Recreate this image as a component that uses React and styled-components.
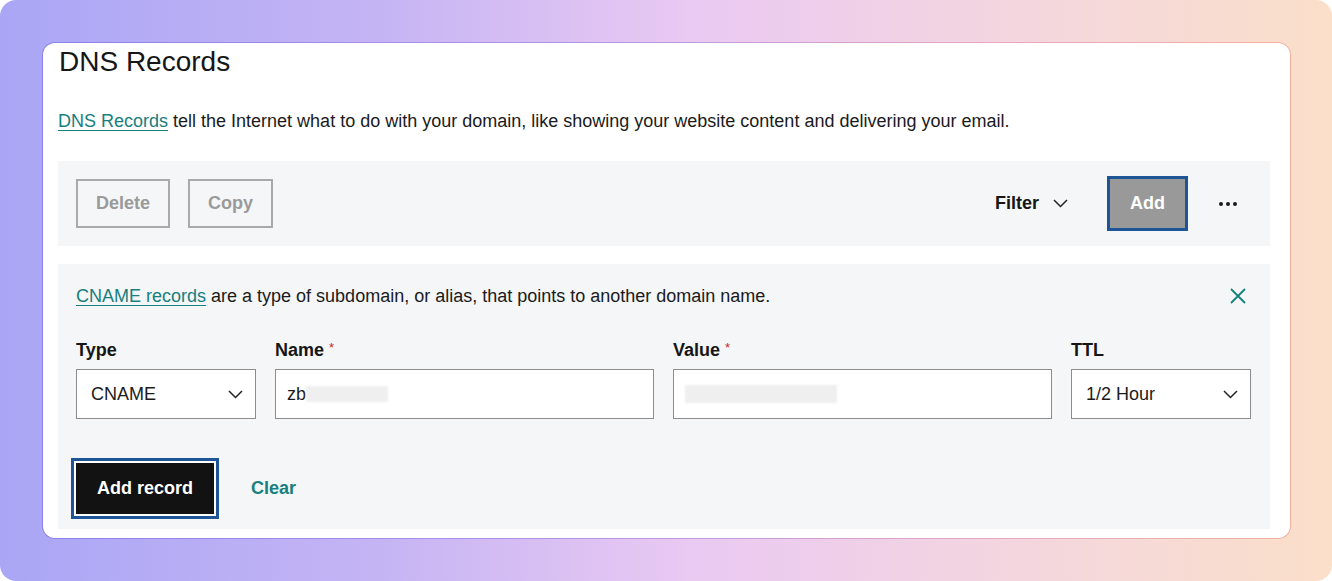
import styled, { createGlobalStyle } from "styled-components";

const GlobalStyle = createGlobalStyle`
    html, body {
        margin: 0;
        padding: 0;
        background: #ffffff;
        font-family: "Liberation Sans", Arial, Helvetica, sans-serif;
    }
    * {
        box-sizing: border-box;
    }
`;

function Chevron() {
    return (
        <svg width="15" height="9" viewBox="0 0 15 9" fill="none">
            <path d="M1 1l6.5 6.5L14 1" stroke="#222" strokeWidth="1.5" />
        </svg>
    );
}

function CloseIcon() {
    return (
        <svg width="16" height="16" viewBox="0 0 16 16" fill="none">
            <path d="M1 1l14 14M15 1L1 15" stroke="#17807e" strokeWidth="1.8" />
        </svg>
    );
}

export default function App() {
    return (
        <>
            <GlobalStyle />
            <Backdrop>
                <CardBorder>
                    <Card>
                        <Title>DNS Records</Title>
                        <Description>
                            <TealLink>DNS Records</TealLink> tell the Internet what to do with your domain, like showing your website content and delivering your email.
                        </Description>

                        <Toolbar>
                            <ToolGroup>
                                <GhostButton>Delete</GhostButton>
                                <GhostButton>Copy</GhostButton>
                            </ToolGroup>
                            <ToolGroup>
                                <FilterButton>
                                    Filter <Chevron />
                                </FilterButton>
                                <AddButton>Add</AddButton>
                                <MoreButton>
                                    <Dot /><Dot /><Dot />
                                </MoreButton>
                            </ToolGroup>
                        </Toolbar>

                        <FormPanel>
                            <InfoRow>
                                <span>
                                    <TealLink>CNAME records</TealLink> are a type of subdomain, or alias, that points to another domain name.
                                </span>
                                <CloseButton><CloseIcon /></CloseButton>
                            </InfoRow>

                            <FieldGrid>
                                <Field>
                                    <Label>Type</Label>
                                    <Select>
                                        CNAME <Chevron />
                                    </Select>
                                </Field>
                                <Field>
                                    <Label>Name <Required>*</Required></Label>
                                    <Input>
                                        zb<Blur $width={82} />
                                    </Input>
                                </Field>
                                <Field>
                                    <Label>Value <Required>*</Required></Label>
                                    <Input>
                                        <Blur $width={152} $tall />
                                    </Input>
                                </Field>
                                <Field>
                                    <Label>TTL</Label>
                                    <Select>
                                        1/2 Hour <Chevron />
                                    </Select>
                                </Field>
                            </FieldGrid>

                            <Actions>
                                <PrimaryButton>Add record</PrimaryButton>
                                <TextButton>Clear</TextButton>
                            </Actions>
                        </FormPanel>
                    </Card>
                </CardBorder>
            </Backdrop>
        </>
    );
}

const Backdrop = styled.div`
    width: 1332px;
    height: 581px;
    border-radius: 16px;
    padding: 42px 42px 0 42px;
    background: linear-gradient(90deg, #aaa6f5 0%, #c4b4f4 28%, #eac9f2 52%, #f3d6df 76%, #fbdfc9 100%);
`;

const CardBorder = styled.div`
    width: 1249px;
    height: 497px;
    padding: 1px;
    border-radius: 13px;
    background: linear-gradient(90deg, #8d80ee 0%, #b596e6 45%, #e7a8c4 75%, #f4b09e 100%);
`;

const Card = styled.div`
    height: 100%;
    background: #ffffff;
    border-radius: 12px;
    padding: 2px 20px 0 15px;
    overflow: hidden;
`;

const Title = styled.h1`
    margin: 0;
    font-size: 28px;
    line-height: 34px;
    font-weight: 400;
    color: #161616;
    padding-left: 1px;
`;

const Description = styled.p`
    margin: 30px 0 0 0;
    font-size: 18px;
    line-height: 24px;
    color: #1b1b1b;
`;

const TealLink = styled.a`
    color: #17807e;
    text-decoration: underline;
    text-underline-offset: 3px;
    text-decoration-thickness: 1px;
    cursor: pointer;
`;

const Toolbar = styled.div`
    margin-top: 28px;
    height: 85px;
    background: #f4f6f8;
    display: flex;
    align-items: center;
    justify-content: space-between;
    padding: 0 21px 0 18px;
`;

const ToolGroup = styled.div`
    display: flex;
    align-items: center;
    gap: 18px;
`;

const GhostButton = styled.button`
    height: 49px;
    padding: 0 18px;
    background: transparent;
    border: 2px solid #a9a9a9;
    color: #9a9a9a;
    font-family: inherit;
    font-size: 18px;
    font-weight: 700;
`;

const FilterButton = styled.button`
    display: flex;
    align-items: center;
    gap: 14px;
    background: transparent;
    border: none;
    padding: 0 12px;
    margin-right: 9px;
    color: #161616;
    font-family: inherit;
    font-size: 18px;
    font-weight: 700;
`;

const AddButton = styled.button`
    width: 81px;
    height: 55px;
    background: #999999;
    border: 3px solid #1d5597;
    color: #ffffff;
    font-family: inherit;
    font-size: 18px;
    font-weight: 700;
`;

const MoreButton = styled.button`
    display: flex;
    gap: 3px;
    background: transparent;
    border: none;
    padding: 0 12px;
    margin-left: 1px;
`;

const Dot = styled.span`
    width: 4px;
    height: 4px;
    border-radius: 50%;
    background: #1b1b1b;
`;

const FormPanel = styled.div`
    margin-top: 18px;
    height: 265px;
    background: #f4f6f8;
    padding: 20px 19px 0 18px;
`;

const InfoRow = styled.div`
    display: flex;
    justify-content: space-between;
    align-items: center;
    font-size: 18px;
    line-height: 24px;
    color: #1b1b1b;
`;

const CloseButton = styled.button`
    display: flex;
    background: transparent;
    border: none;
    padding: 0;
    margin-right: 5px;
`;

const FieldGrid = styled.div`
    display: grid;
    grid-template-columns: 180px 1fr 1fr 180px;
    gap: 19px;
    margin-top: 30px;
`;

const Field = styled.div`
    display: flex;
    flex-direction: column;
    gap: 7px;
`;

const Label = styled.label`
    font-size: 18px;
    line-height: 24px;
    font-weight: 700;
    color: #161616;
`;

const Required = styled.span`
    color: #d0271d;
    font-size: 13px;
    font-weight: 400;
    vertical-align: top;
    position: relative;
    top: -2px;
`;

const Select = styled.div`
    height: 50px;
    background: #ffffff;
    border: 1px solid #8d8d8d;
    display: flex;
    align-items: center;
    justify-content: space-between;
    padding: 0 12px 0 14px;
    font-size: 18px;
    color: #1b1b1b;
`;

const Input = styled.div`
    height: 50px;
    background: #ffffff;
    border: 1px solid #8d8d8d;
    display: flex;
    align-items: center;
    padding: 0 11px;
    font-size: 18px;
    color: #1b1b1b;
`;

const Blur = styled.span`
    display: inline-block;
    width: ${p => p.$width}px;
    height: ${p => (p.$tall ? 18 : 16)}px;
    background: #efefef;
    filter: blur(1px);
`;

const Actions = styled.div`
    display: flex;
    align-items: center;
    gap: 37px;
    margin-top: 44px;
`;

const PrimaryButton = styled.button`
    height: 51px;
    padding: 0 21px;
    background: #121212;
    border: none;
    color: #ffffff;
    font-family: inherit;
    font-size: 18px;
    font-weight: 700;
    box-shadow: 0 0 0 2px #ffffff, 0 0 0 5px #1d5597;
`;

const TextButton = styled.button`
    background: transparent;
    border: none;
    padding: 0;
    color: #17807e;
    font-family: inherit;
    font-size: 18px;
    font-weight: 700;
`;
